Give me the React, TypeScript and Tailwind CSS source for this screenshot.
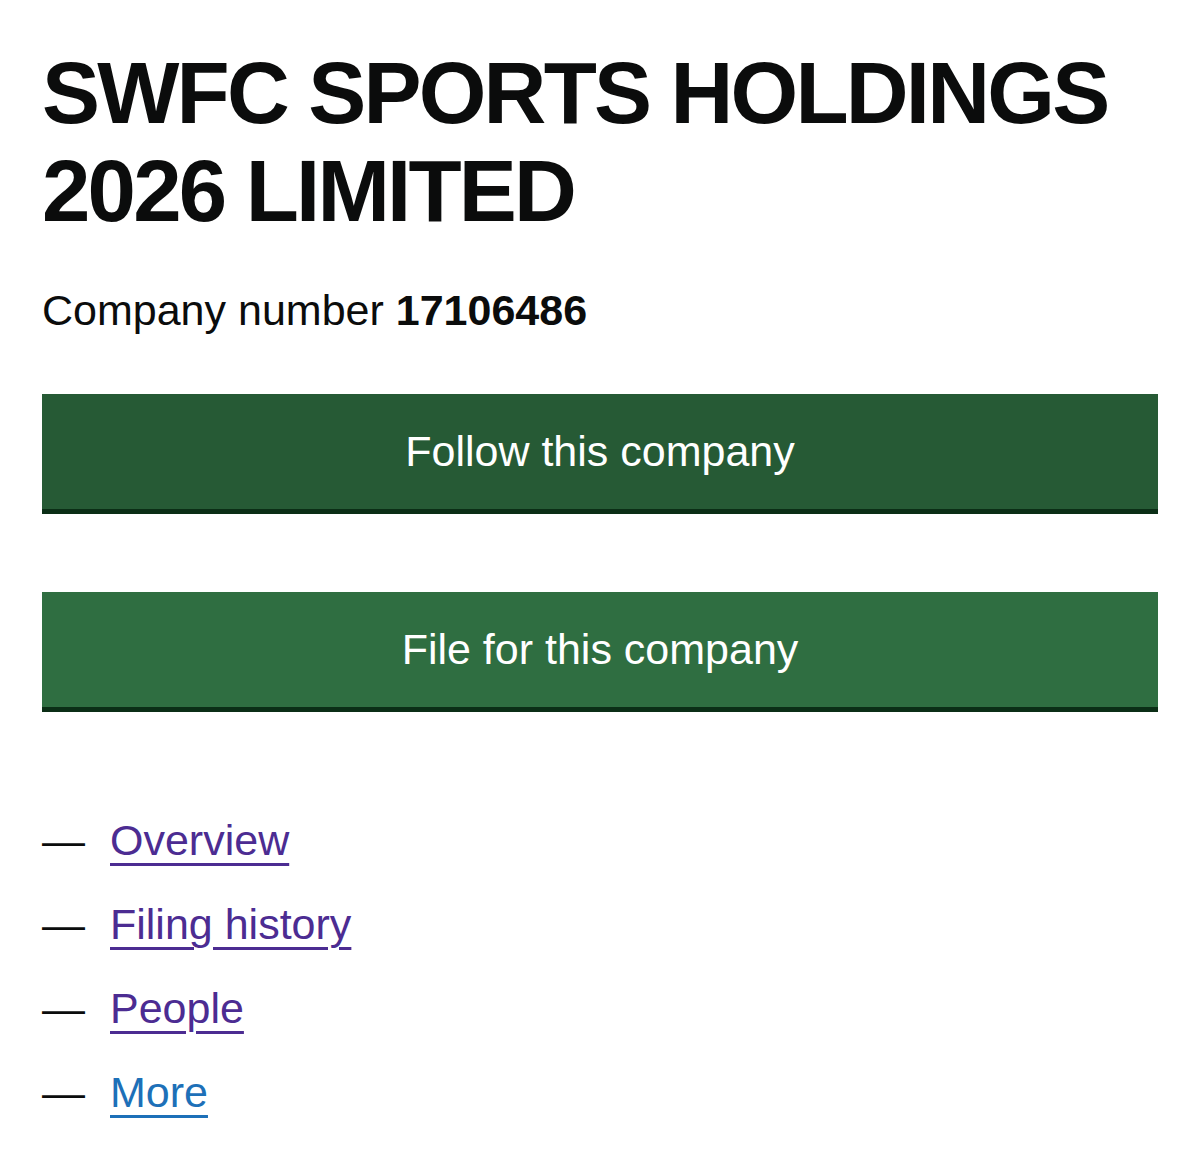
import React from "react";

const links = [
    { label: "Overview", visited: true },
    { label: "Filing history", visited: true },
    { label: "People", visited: true },
    { label: "More", visited: false },
];

const App = () => {
    return (
        <div className="min-h-[1170px] bg-white px-[42px] pt-[44px] text-[#0b0c0c] font-['Liberation_Sans',Arial,sans-serif]">
            <h1 className="text-[87px] font-bold leading-[98px] tracking-[-2.8px]">
                SWFC SPORTS HOLDINGS 2026 LIMITED
            </h1>

            <p className="mt-[42px] text-[43px] leading-[56px]">
                Company number <strong className="font-bold">17106486</strong>
            </p>

            <div className="mt-[56px] flex flex-col gap-[83px]">
                <button className="h-[115px] w-full bg-[#265a35] text-[43px] text-white shadow-[0_5px_0_#0b2e16]">
                    Follow this company
                </button>
                <button className="h-[115px] w-full bg-[#2f6e41] text-[43px] text-white shadow-[0_5px_0_#0b2e16]">
                    File for this company
                </button>
            </div>

            <ul className="mt-[105px] flex flex-col gap-[28px]">
                {links.map((l) => (
                    <li key={l.label} className="flex items-center text-[43px] leading-[56px]">
                        <span className="w-[68px]">—</span>
                        <a
                            href="#"
                            className={`underline decoration-[3px] underline-offset-[8px] ${l.visited ? "text-[#4c2c92]" : "text-[#1d70b8]"}`}
                        >
                            {l.label}
                        </a>
                    </li>
                ))}
            </ul>
        </div>
    );
};

export default App;
